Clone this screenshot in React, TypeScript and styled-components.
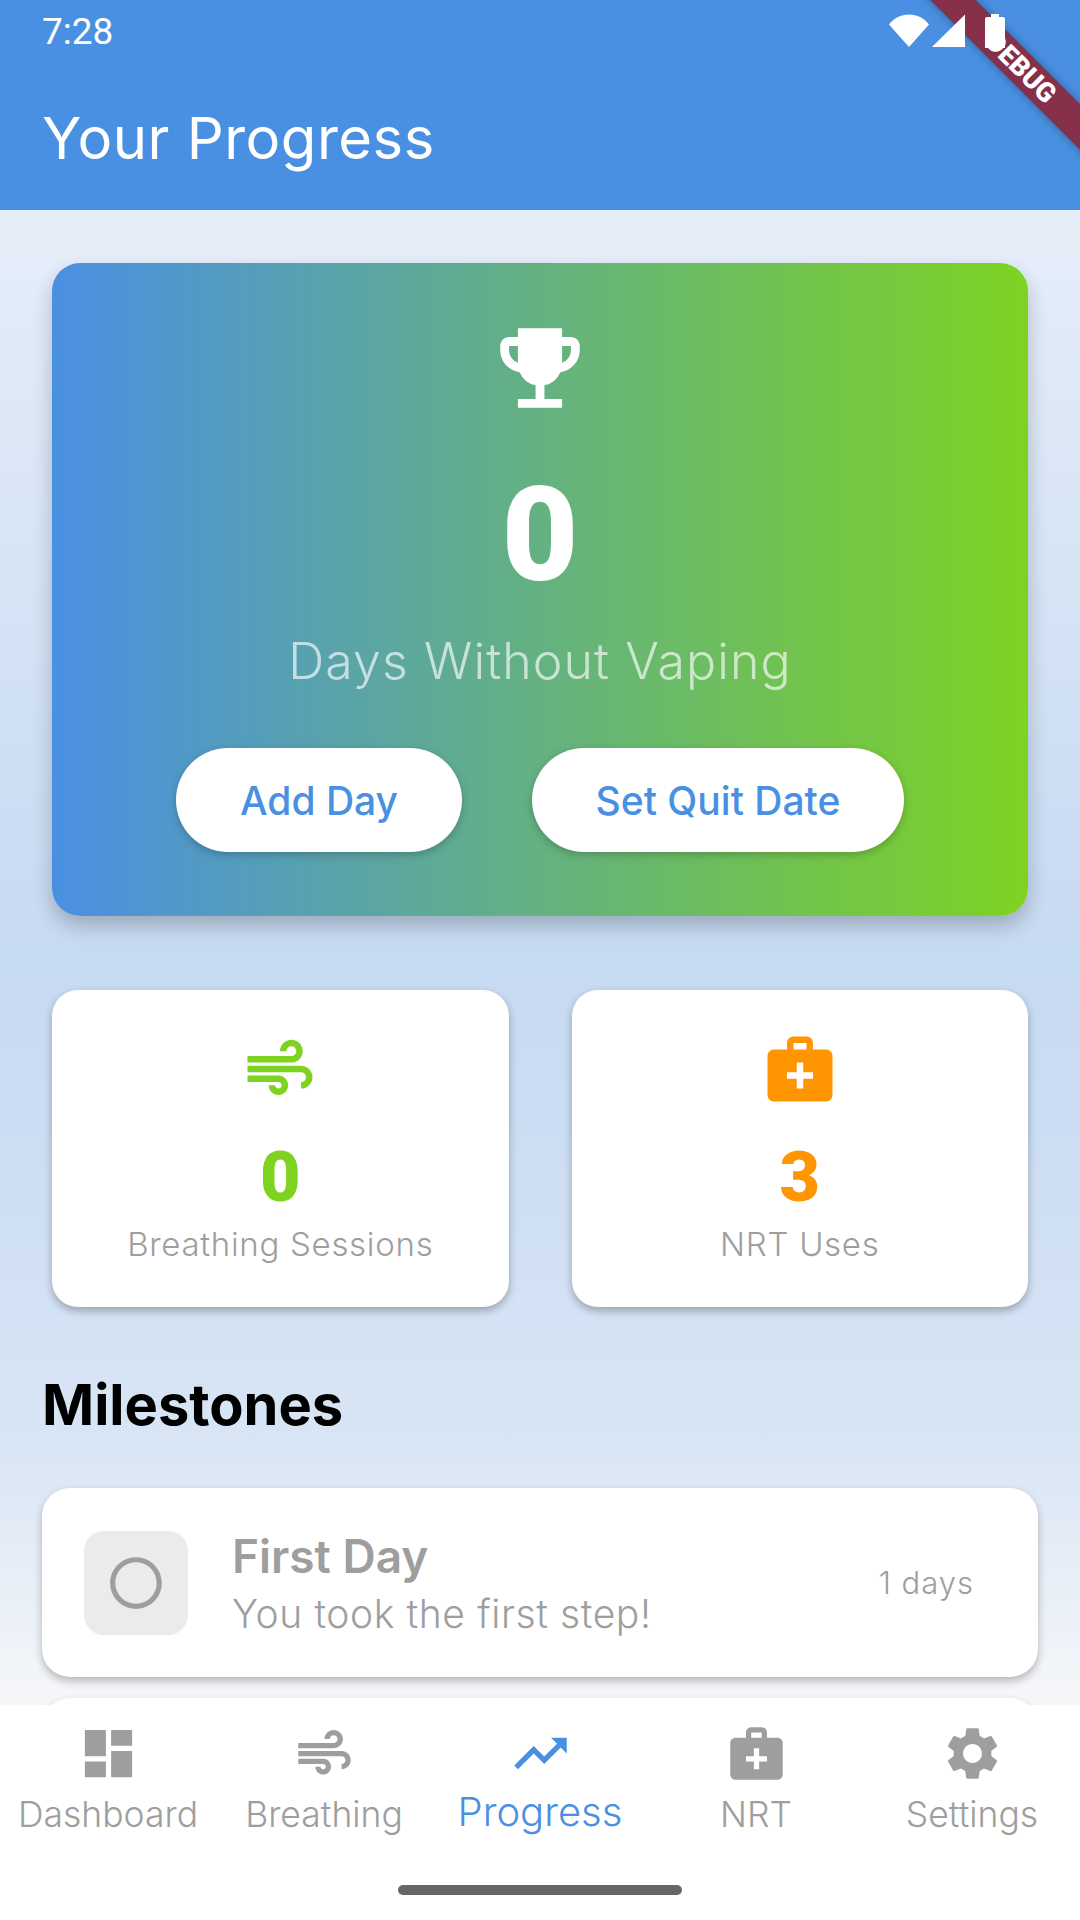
import styled, { createGlobalStyle } from 'styled-components';
import {
  MdAir,
  MdDashboard,
  MdEmojiEvents,
  MdMedicalServices,
  MdRadioButtonUnchecked,
  MdSettings,
  MdTrendingUp,
} from 'react-icons/md';

const BLUE = '#4a90e2';
const GREEN = '#7ed321';
const ORANGE = '#ff9500';
const GREY = '#9e9e9e';

const GlobalStyle = createGlobalStyle`
  html, body {
    margin: 0;
    padding: 0;
    background: #fff;
  }
  * {
    box-sizing: border-box;
  }
`;

const navItems = [
  { label: 'Dashboard', Icon: MdDashboard },
  { label: 'Breathing', Icon: MdAir },
  { label: 'Progress', Icon: MdTrendingUp, active: true },
  { label: 'NRT', Icon: MdMedicalServices },
  { label: 'Settings', Icon: MdSettings },
];

export default function App() {
  return (
    <Page>
      <GlobalStyle />
      <Header>
        <StatusBar>
          <Clock>7:28</Clock>
          <StatusIcons>
            <svg width="40" height="34" viewBox="0 0 40 34">
              <path d="M0 10.5C5 4 12 0.5 20 0.5S35 4 40 10.5L20 33Z" fill="#fff" />
            </svg>
            <svg width="34" height="34" viewBox="0 0 34 34">
              <path d="M33 0.5V33H0Z" fill="#fff" />
            </svg>
            <BatterySlot>
              <svg width="20" height="34" viewBox="0 0 20 34">
                <path d="M6 0h8v3h4a2 2 0 0 1 2 2v29H0V5a2 2 0 0 1 2-2h4Z" fill="#fff" />
              </svg>
            </BatterySlot>
          </StatusIcons>
        </StatusBar>
        <Title>Your Progress</Title>
      </Header>

      <Content>
        <HeroCard>
          <MdEmojiEvents size={106} color="#fff" />
          <HeroNumber>0</HeroNumber>
          <HeroLabel>Days Without Vaping</HeroLabel>
          <HeroActions>
            <PillButton $width={286}>Add Day</PillButton>
            <PillButton $width={372}>Set Quit Date</PillButton>
          </HeroActions>
        </HeroCard>

        <StatsRow>
          <StatCard>
            <MdAir size={78} color={GREEN} />
            <StatValue $color={GREEN}>0</StatValue>
            <StatLabel>Breathing Sessions</StatLabel>
          </StatCard>
          <StatCard>
            <MdMedicalServices size={78} color={ORANGE} />
            <StatValue $color={ORANGE}>3</StatValue>
            <StatLabel>NRT Uses</StatLabel>
          </StatCard>
        </StatsRow>

        <SectionTitle>Milestones</SectionTitle>

        <MilestoneCard>
          <MilestoneBadge>
            <MdRadioButtonUnchecked size={62} color={GREY} />
          </MilestoneBadge>
          <MilestoneText>
            <MilestoneName>First Day</MilestoneName>
            <MilestoneDesc>You took the first step!</MilestoneDesc>
          </MilestoneText>
          <MilestoneDays>1 days</MilestoneDays>
        </MilestoneCard>
        <MilestoneCard />
      </Content>

      <BottomNav>
        {navItems.map(({ label, Icon, active }) => (
          <NavItem key={label}>
            <Icon size={63} color={active ? BLUE : GREY} />
            <NavLabel $active={active}>{label}</NavLabel>
          </NavItem>
        ))}
        <HomeIndicator />
      </BottomNav>

      <DebugBanner>DEBUG</DebugBanner>
    </Page>
  );
}

const Page = styled.div`
  position: relative;
  width: 1080px;
  height: 1920px;
  overflow: hidden;
  display: flex;
  flex-direction: column;
  font-family: Inter, 'Open Sans', sans-serif;
`;

const Header = styled.header`
  height: 210px;
  flex-shrink: 0;
  background: ${BLUE};
  color: #fff;
  padding: 0 42px;
`;

const StatusBar = styled.div`
  position: relative;
  z-index: 2;
  height: 62px;
  display: flex;
  align-items: center;
  justify-content: space-between;
`;

const Clock = styled.span`
  font-family: Roboto, sans-serif;
  font-size: 37px;
  line-height: 62px;
  padding-top: 1px;
`;

const StatusIcons = styled.div`
  display: flex;
  align-items: flex-start;
  gap: 3px;
  margin-right: 33px;
`;

const BatterySlot = styled.div`
  margin-left: 16px;
  display: flex;
`;

const Title = styled.h1`
  margin: 44px 0 0;
  font-size: 58px;
  font-weight: 400;
  line-height: 64px;
  letter-spacing: 0.5px;
`;

const Content = styled.main`
  flex: 1;
  min-height: 0;
  overflow: hidden;
  padding: 53px 42px 0;
  background: linear-gradient(180deg, #e6eef9 0%, #c6daf2 50%, #d8e5f5 82%, #f6f7f9 100%);
`;

const HeroCard = styled.section`
  margin: 0 10px;
  height: 653px;
  border-radius: 28px;
  padding-top: 52px;
  display: flex;
  flex-direction: column;
  align-items: center;
  background: linear-gradient(90deg, ${BLUE}, ${GREEN});
  box-shadow: 0 10px 20px rgba(0, 0, 0, 0.22);
`;

const HeroNumber = styled.div`
  margin-top: 39px;
  font-family: Roboto, Inter, sans-serif;
  font-size: 132px;
  font-weight: 900;
  line-height: 150px;
  color: #fff;
`;

const HeroLabel = styled.div`
  margin-top: 21px;
  font-size: 50px;
  font-weight: 300;
  line-height: 60px;
  letter-spacing: 1.1px;
  color: rgba(255, 255, 255, 0.65);
`;

const HeroActions = styled.div`
  margin-top: 57px;
  display: flex;
  gap: 70px;
`;

const PillButton = styled.button<{ $width: number }>`
  width: ${(p) => p.$width}px;
  height: 104px;
  border: 0;
  border-radius: 52px;
  background: #fff;
  color: ${BLUE};
  font-family: inherit;
  font-size: 39px;
  font-weight: 500;
  box-shadow: 0 3px 8px rgba(0, 0, 0, 0.22);
`;

const StatsRow = styled.div`
  margin: 74px 10px 0;
  display: flex;
  gap: 63px;
`;

const StatCard = styled.section`
  flex: 1;
  height: 317px;
  border-radius: 26px;
  padding-top: 40px;
  display: flex;
  flex-direction: column;
  align-items: center;
  background: #fff;
  box-shadow: 0 4px 8px rgba(0, 0, 0, 0.28);
`;

const StatValue = styled.div<{ $color: string }>`
  margin-top: 32px;
  font-family: Roboto, Inter, sans-serif;
  font-size: 70px;
  font-weight: 900;
  line-height: 74px;
  color: ${(p) => p.$color};
`;

const StatLabel = styled.div`
  margin-top: 8px;
  font-size: 33px;
  font-weight: 300;
  line-height: 44px;
  letter-spacing: 0.7px;
  color: ${GREY};
`;

const SectionTitle = styled.h2`
  margin: 67px 0 0;
  font-size: 56px;
  font-weight: 700;
  line-height: 62px;
  color: #000;
`;

const MilestoneCard = styled.article`
  height: 189px;
  margin-top: 52px;
  padding: 0 64px 0 42px;
  border-radius: 28px;
  display: flex;
  align-items: center;
  background: #fff;
  box-shadow: 0 4px 8px rgba(0, 0, 0, 0.26);

  & + & {
    margin-top: 21px;
  }
`;

const MilestoneBadge = styled.div`
  width: 104px;
  height: 104px;
  border-radius: 20px;
  flex-shrink: 0;
  display: flex;
  align-items: center;
  justify-content: center;
  background: #ebebeb;
`;

const MilestoneText = styled.div`
  flex: 1;
  margin: 2px 0 0 44px;
`;

const MilestoneName = styled.div`
  font-size: 46px;
  font-weight: 600;
  line-height: 54px;
  color: ${GREY};
`;

const MilestoneDesc = styled.div`
  margin-top: 6px;
  font-size: 39px;
  font-weight: 300;
  line-height: 50px;
  letter-spacing: 0.6px;
  color: ${GREY};
`;

const MilestoneDays = styled.div`
  font-size: 31px;
  font-weight: 300;
  letter-spacing: 1px;
  color: ${GREY};
`;

const BottomNav = styled.nav`
  position: relative;
  height: 215px;
  flex-shrink: 0;
  display: grid;
  grid-template-columns: repeat(5, 1fr);
  padding-top: 17px;
  align-items: start;
  background: #fff;
`;

const NavItem = styled.div`
  display: flex;
  flex-direction: column;
  align-items: center;
`;

const NavLabel = styled.span<{ $active?: boolean }>`
  margin-top: ${(p) => (p.$active ? 5 : 8)}px;
  font-size: ${(p) => (p.$active ? 40 : 35.5)}px;
  font-weight: 300;
  line-height: 44px;
  white-space: nowrap;
  color: ${(p) => (p.$active ? BLUE : GREY)};
`;

const HomeIndicator = styled.div`
  position: absolute;
  left: 398px;
  top: 180px;
  width: 284px;
  height: 10px;
  border-radius: 5px;
  background: #666;
`;

const DebugBanner = styled.div`
  position: absolute;
  top: 52px;
  right: -71px;
  width: 260px;
  height: 32px;
  transform: rotate(45deg);
  display: flex;
  align-items: center;
  justify-content: center;
  background: rgba(155, 12, 15, 0.73);
  box-shadow: 0 0 10px rgba(0, 0, 0, 0.35);
  color: #fff;
  font-family: Roboto, sans-serif;
  font-size: 27px;
  font-weight: 900;
`;
